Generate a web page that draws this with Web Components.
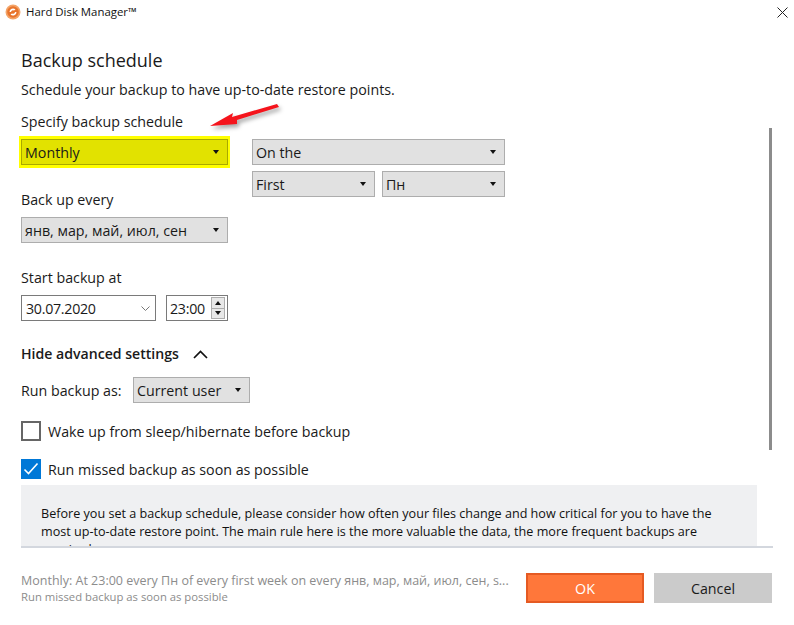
<!DOCTYPE html>
<html>
<head>
<meta charset="utf-8">
<style>
  html, body { margin: 0; padding: 0; background: #fff; }
  body { font-family: "Open Sans", "Noto Sans", sans-serif; font-size: 14.25px; color: #1a1a1a; }
</style>
</head>
<body>
<backup-dialog></backup-dialog>

<script>
class TitleBar extends HTMLElement {
  constructor() {
    super();
    this.attachShadow({ mode: 'open' }).innerHTML = `
      <style>
        :host { display: flex; align-items: center; height: 24px; padding-left: 5px; font-size: 11.4px; color: #111; }
        svg.logo { width: 16px; height: 16px; margin-right: 5px; flex: none; }
        .text { flex: 1; margin-bottom: 1px; }
        svg.close { width: 11px; height: 11px; margin-right: 6px; flex: none; }
      </style>
      <svg class="logo" viewBox="0 0 16 16">
        <circle cx="8" cy="8" r="7.5" fill="#f4a468"/>
        <circle cx="8" cy="8" r="5.8" fill="#e8742c"/>
        <path d="M4.5 8a3.5 3.5 0 0 1 6-2.5L9 6.5a2 2 0 0 0-3 1.5zM11.5 8a3.5 3.5 0 0 1-6 2.5L7 9.5a2 2 0 0 0 3-1.5z" fill="#fff"/>
      </svg>
      <span class="text"><slot></slot></span>
      <svg class="close" viewBox="0 0 11 11"><path d="M.5 .5l10 10M10.5 .5l-10 10" stroke="#222" fill="none"/></svg>`;
  }
}

class ComboBox extends HTMLElement {
  constructor() {
    super();
    this.attachShadow({ mode: 'open' }).innerHTML = `
      <style>
        :host { display: flex; align-items: center; box-sizing: border-box; height: 26px; padding: 0 8px 0 3px;
          background: #e1e1e1; border: 1px solid #adadad; font-size: 14.25px; color: #1a1a1a; }
        :host([highlight]) { background: #e2e200; border-color: #a9a900;
          box-shadow: 0 -1px 0 2px #ffff00, 0 1px 0 2px #ffff00; }
        .value { flex: 1; white-space: nowrap; }
        i { width: 0; height: 0; border: 3.5px solid transparent; border-top: 4px solid #111; border-bottom: 0; margin-bottom: 1px; }
      </style>
      <span class="value"><slot></slot></span><i></i>`;
  }
}

class DateField extends HTMLElement {
  constructor() {
    super();
    this.attachShadow({ mode: 'open' }).innerHTML = `
      <style>
        :host { display: flex; align-items: center; box-sizing: border-box; height: 26px; width: 135px; padding: 0 5px 0 4px;
          border: 1px solid #7a7a7a; background: #fff; font-size: 14.25px; letter-spacing: -.3px; }
        .value { flex: 1; }
        svg { width: 9px; height: 5px; }
      </style>
      <span class="value"><slot></slot></span>
      <svg viewBox="0 0 9 5"><path d="M.5 .5l4 4 4-4" stroke="#777" fill="none"/></svg>`;
  }
}

class TimeField extends HTMLElement {
  constructor() {
    super();
    this.attachShadow({ mode: 'open' }).innerHTML = `
      <style>
        :host { display: flex; align-items: center; box-sizing: border-box; height: 26px; width: 62px; padding: 1px 1px 1px 3px;
          border: 1px solid #7a7a7a; background: #fff; font-size: 14.25px; letter-spacing: -.3px; }
        .value { flex: 1; }
        .spin { display: flex; flex-direction: column; gap: 0; width: 14px; height: 22px; margin-right: 1px; }
        .spin b { flex: 1; display: flex; align-items: center; justify-content: center; background: #e8e8e8; border: 1px solid #adadad; }
        .spin b + b { border-top: 0; }
        .up { width: 0; height: 0; border: 3px solid transparent; border-bottom: 4px solid #111; border-top: 0; }
        .down { width: 0; height: 0; border: 3px solid transparent; border-top: 4px solid #111; border-bottom: 0; }
      </style>
      <span class="value"><slot></slot></span>
      <div class="spin"><b><span class="up"></span></b><b><span class="down"></span></b></div>`;
  }
}

class CheckRow extends HTMLElement {
  constructor() {
    super();
    this.attachShadow({ mode: 'open' }).innerHTML = `
      <style>
        :host { display: flex; align-items: center; gap: 7px; height: 20px; font-size: 14.25px; }
        .box { box-sizing: border-box; width: 20px; height: 20px; border: 2px solid #666; background: #fff; flex: none; }
        :host([checked]) .box { background: #0078d7; border-color: #0078d7; }
        svg { display: none; width: 16px; height: 16px; }
        :host([checked]) svg { display: block; }
      </style>
      <div class="box"><svg viewBox="0 0 16 16"><path d="M1.5 8.5l4 4 9-10" stroke="#fff" stroke-width="1.6" fill="none"/></svg></div>
      <span><slot></slot></span>`;
  }
}

class ActionButton extends HTMLElement {
  constructor() {
    super();
    this.attachShadow({ mode: 'open' }).innerHTML = `
      <style>
        :host { display: flex; align-items: center; justify-content: center; box-sizing: border-box; width: 118px; height: 30px;
          background: #cbcbcb; color: #1a1a1a; font-size: 14.25px; }
        :host([primary]) { background: #ff773a; border: 2px solid #e55a22; color: #fff; }
      </style>
      <slot></slot>`;
  }
}

class BackupDialog extends HTMLElement {
  constructor() {
    super();
    this.attachShadow({ mode: 'open' }).innerHTML = `
      <style>
        :host { display: flex; flex-direction: column; position: relative; width: 794px; height: 625px; overflow: hidden; background: #fff; }
        .scroller { height: 524px; margin-left: 21px; width: 752px; box-sizing: border-box; border-bottom: 2px solid #d3d7de; }
        h1 { font-weight: 400; font-size: 18px; line-height: 24px; margin: 24px 0 0; color: #1a1a1a; }
        p { margin: 0; line-height: 20px; }
        .intro { margin-top: 8px; }
        .label { margin: 0; line-height: 20px; }
        .grid { display: grid; grid-template-columns: 207px 253px; column-gap: 24px; margin-top: 12px; }
        .left { display: flex; flex-direction: column; }
        .right { display: flex; flex-direction: column; gap: 6px; }
        .pair { display: grid; grid-template-columns: 123px 123px; column-gap: 7px; }
        .time { display: flex; gap: 10px; margin-top: 7px; }
        .toggle { display: flex; align-items: center; gap: 14px; font-weight: 600; font-size: 14.1px; margin-top: 23px; line-height: 20px; }
        .toggle svg { width: 15px; height: 9px; }
        .runas { display: flex; align-items: center; margin-top: 13px; }
        .runas span { width: 112px; }
        .runas combo-box { width: 117px; }
        .info { box-sizing: border-box; width: 736px; height: 61px; overflow: hidden; margin-top: 6px; padding: 20px 20px 0; background: #eff0f2; font-size: 12.6px; line-height: 18px; color: #111; }
        .track { position: absolute; left: 769px; top: 128px; width: 3px; height: 322px; background: #8c8c8c; }
        footer { display: flex; align-items: center; padding: 0 22px 0 21px; margin-top: 24px; }
        .summary { flex: 1; min-width: 0; color: #8c8c8c; }
        .summary div { white-space: nowrap; overflow: hidden; }
        .summary .l1 { font-size: 12.5px; line-height: 17px; }
        .summary .l2 { font-size: 11.3px; line-height: 15px; }
        .buttons { display: flex; gap: 10px; margin-left: 17px; }
        .arrow { position: absolute; left: 200px; top: 100px; width: 90px; height: 40px; filter: drop-shadow(2px 3px 2px rgba(0,0,0,.35)); }
      </style>
      <title-bar>Hard Disk Manager™</title-bar>
      <div class="scroller">
        <h1>Backup schedule</h1>
        <p class="intro">Schedule your backup to have up-to-date restore points.</p>
        <div class="grid">
          <div class="left">
            <p class="label">Specify backup schedule</p>
            <combo-box highlight style="margin-top:7px">Monthly</combo-box>
            <p class="label" style="margin-top:25px">Back up every</p>
            <combo-box style="margin-top:7px">янв, мар, май, июл, сен</combo-box>
            <p class="label" style="margin-top:25px">Start backup at</p>
            <div class="time">
              <date-field>30.07.2020</date-field>
              <time-field>23:00</time-field>
            </div>
          </div>
          <div class="right" style="margin-top:27px">
            <combo-box>On the</combo-box>
            <div class="pair"><combo-box>First</combo-box><combo-box>Пн</combo-box></div>
          </div>
        </div>
        <div class="toggle">Hide advanced settings
          <svg viewBox="0 0 15 9"><path d="M1 8l6.5-6.5L14 8" stroke="#111" stroke-width="1.7" fill="none"/></svg>
        </div>
        <div class="runas"><span>Run backup as:</span><combo-box>Current user</combo-box></div>
        <check-row style="margin-top:18px">Wake up from sleep/hibernate before backup</check-row>
        <check-row checked style="margin-top:18px">Run missed backup as soon as possible</check-row>
        <div class="info">Before you set a backup schedule, please consider how often your files change and how critical for you to have the most up-to-date restore point. The main rule here is the more valuable the data, the more frequent backups are required.</div>
      </div>
      <div class="track"></div>
      <footer>
        <div class="summary">
          <div class="l1">Monthly: At 23:00 every Пн of every first week on every янв, мар, май, июл, сен, s...</div>
          <div class="l2">Run missed backup as soon as possible</div>
        </div>
        <div class="buttons">
          <action-button primary>OK</action-button>
          <action-button>Cancel</action-button>
        </div>
      </footer>
      <svg class="arrow" viewBox="0 0 90 40">
        <path d="M10 26 L33 13 L32 17 L77 4 L79 7 L37 20 L37 24 Z" fill="#f5141c"/>
      </svg>`;
  }
}

customElements.define('title-bar', TitleBar);
customElements.define('combo-box', ComboBox);
customElements.define('date-field', DateField);
customElements.define('time-field', TimeField);
customElements.define('check-row', CheckRow);
customElements.define('action-button', ActionButton);
customElements.define('backup-dialog', BackupDialog);
</script>
</body>
</html>
